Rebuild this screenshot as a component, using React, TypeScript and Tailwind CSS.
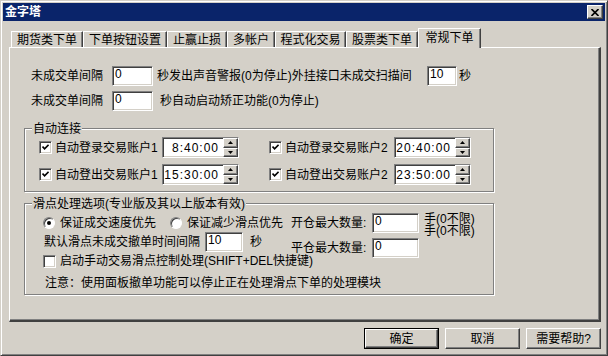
import React from 'react'

const raised = "border border-t-white border-l-white border-b-[#404040] border-r-[#404040] shadow-[inset_-1px_-1px_0_#808080]"
const sunken = "border border-t-[#808080] border-l-[#808080] border-b-white border-r-white shadow-[inset_1px_1px_0_#404040,inset_-1px_-1px_0_#d4d0c8]"
const etched = "border border-[#808080] shadow-[inset_1px_1px_0_#fff,1px_1px_0_#fff]"

function Field({w, value}: {w: string, value: string}) {
    return (
        <div className={`${w} h-[20px] shrink-0 bg-white ${sunken} pl-[2px] flex items-start leading-[14px]`}>{value}</div>
    )
}

function Check({on}: {on: boolean}) {
    return (
        <div className={`w-[13px] h-[13px] shrink-0 bg-white ${sunken} flex items-center justify-center`}>
            {on ? (
                <svg width="7" height="7" viewBox="0 0 7 7">
                    <path d="M0.5 2.5 L2.6 4.8 L6.6 0.8" fill="none" stroke="#000" strokeWidth="1.7"/>
                </svg>
            ) : null}
        </div>
    )
}

function Radio({on}: {on: boolean}) {
    return (
        <div className="w-[12px] h-[12px] shrink-0 rounded-full bg-white border border-t-[#808080] border-l-[#808080] border-b-white border-r-white shadow-[inset_1px_1px_0_#404040] flex items-center justify-center">
            {on ? <div className="w-[4px] h-[4px] rounded-full bg-black"/> : null}
        </div>
    )
}

function Spin({up}: {up: boolean}) {
    return (
        <div className={`flex-1 bg-[#d4d0c8] ${raised} flex items-center justify-center`}>
            <svg width="5" height="3" viewBox="0 0 5 3">
                <path d={up ? "M2.5 0 L5 3 L0 3 Z" : "M0 0 L5 0 L2.5 3 Z"} fill="#000"/>
            </svg>
        </div>
    )
}

function Time({value}: {value: string}) {
    return (
        <div className={`w-[77px] h-[21px] shrink-0 bg-white ${sunken} flex`}>
            <div className="flex-1 flex items-center justify-end pr-[4px] tracking-[1px]">{value}</div>
            <div className="w-[15px] flex flex-col">
                <Spin up={true}/>
                <Spin up={false}/>
            </div>
        </div>
    )
}

function Btn({label, def}: {label: string, def?: boolean}) {
    return (
        <div className={`w-[75px] h-[21px] ${def ? "border border-black" : ""} flex`}>
            <div className={`flex-1 ${raised} flex items-center justify-center`}>{label}</div>
        </div>
    )
}

const tabs = [
    {t: '期货类下单', w: 'w-[72px]'},
    {t: '下单按钮设置', w: 'w-[84px]'},
    {t: '止赢止损', w: 'w-[60px]'},
    {t: '多帐户', w: 'w-[48px]'},
    {t: '程式化交易', w: 'w-[71px]'},
    {t: '股票类下单', w: 'w-[72px]'},
]

export default function App() {
    return (
        <div className="w-[608px] h-[356px] bg-[#d4d0c8] border border-t-[#d4d0c8] border-l-[#d4d0c8] border-b-[#404040] border-r-[#404040] shadow-[inset_1px_1px_0_#fff,inset_-1px_-1px_0_#808080] p-[2px] flex flex-col text-[12px] leading-[14px] text-black font-['Liberation_Sans','Noto_Sans_CJK_SC',sans-serif]">

            {/* title bar */}
            <div className="h-[18px] bg-[#0a246a] flex items-center justify-between pl-[2px] pr-[2px]">
                <div className="text-white font-bold text-[12px]">金字塔</div>
                <div className={`w-[16px] h-[14px] bg-[#d4d0c8] ${raised} flex items-center justify-center`}>
                    <svg width="8" height="7" viewBox="0 0 8 7">
                        <path d="M0.5 0 L7.5 7 M7.5 0 L0.5 7" stroke="#000" strokeWidth="1.6"/>
                    </svg>
                </div>
            </div>

            {/* tabs */}
            <div className="mt-[7px] pl-[8px] flex items-end">
                {tabs.map((tab, i) => (
                    <div key={i} className={`${tab.w} h-[16px] border-l border-t border-white border-r border-r-[#404040] shadow-[inset_-1px_0_0_#808080] flex items-center justify-center`}>{tab.t}</div>
                ))}
                <div className="w-[63px] h-[20px] -mb-[1px] pb-[1px] z-10 bg-[#d4d0c8] border-l border-t border-white border-r border-r-[#404040] shadow-[inset_-1px_0_0_#808080] flex items-center justify-center">常规下单</div>
            </div>

            {/* panel */}
            <div className="ml-[6px] w-[592px] h-[275px] border-l border-t border-white border-r-2 border-b-2 border-r-[#404040] border-b-[#404040] shadow-[inset_-1px_-1px_0_#808080] px-[14px] pt-[18px] flex flex-col">

                <div className="ml-[7px] h-[20px] flex items-center">
                    <div className="w-[81px]">未成交单间隔</div>
                    <Field w="w-[41px]" value="0"/>
                    <div className="ml-[4px] w-[270px] whitespace-nowrap">秒发出声音警报(0为停止)外挂接口未成交扫描间</div>
                    <Field w="w-[30px]" value="10"/>
                    <div className="ml-[2px]">秒</div>
                </div>
                <div className="ml-[7px] mt-[5px] h-[20px] flex items-center">
                    <div className="w-[81px]">未成交单间隔</div>
                    <Field w="w-[41px]" value="0"/>
                    <div className="ml-[7px] whitespace-nowrap">秒自动启动矫正功能(0为停止)</div>
                </div>

                {/* 自动连接 */}
                <div className={`mt-[17px] w-[470px] ${etched} pl-[14px] pb-[6px] flex flex-col`}>
                    <div className="-mt-[7px] -ml-[7px] w-fit px-[1px] bg-[#d4d0c8]">自动连接</div>
                    <div className="mt-[1px] h-[21px] flex items-center">
                        <Check on={true}/>
                        <div className="ml-[3px] w-[107px]">自动登录交易账户1</div>
                        <Time value="8:40:00"/>
                        <div className="ml-[30px]"><Check on={true}/></div>
                        <div className="ml-[3px] w-[109px]">自动登录交易账户2</div>
                        <Time value="20:40:00"/>
                    </div>
                    <div className="mt-[6px] h-[21px] flex items-center">
                        <Check on={true}/>
                        <div className="ml-[3px] w-[107px]">自动登出交易账户1</div>
                        <Time value="15:30:00"/>
                        <div className="ml-[30px]"><Check on={true}/></div>
                        <div className="ml-[3px] w-[109px]">自动登出交易账户2</div>
                        <Time value="23:50:00"/>
                    </div>
                </div>

                {/* 滑点处理选项 */}
                <div className={`mt-[11px] w-[470px] ${etched} pl-[18px] pb-[4px] flex flex-col`}>
                    <div className="-mt-[7px] -ml-[11px] w-fit px-[1px] bg-[#d4d0c8] whitespace-nowrap">滑点处理选项(专业版及其以上版本有效)</div>
                    <div className="mt-[2px] flex">
                        <div className="w-[248px] shrink-0 flex flex-col whitespace-nowrap">
                            <div className="h-[19px] flex items-center">
                                <Radio on={true}/>
                                <div className="ml-[5px] w-[110px]">保证成交速度优先</div>
                                <Radio on={false}/>
                                <div className="ml-[5px]">保证减少滑点优先</div>
                            </div>
                            <div className="h-[20px] flex items-center">
                                <div className="ml-[1px] w-[161px]">默认滑点未成交撤单时间间隔</div>
                                <Field w="w-[38px]" value="10"/>
                                <div className="ml-[7px]">秒</div>
                            </div>
                            <div className="mt-[2px] h-[14px] flex items-center">
                                <Check on={false}/>
                                <div className="ml-[4px]">启动手动交易滑点控制处理(SHIFT+DEL快捷键)</div>
                            </div>
                        </div>
                        <div className="flex flex-col whitespace-nowrap">
                            <div className="h-[20px] flex items-center">
                                <div className="w-[81px]">开仓最大数量:</div>
                                <Field w="w-[47px]" value="0"/>
                                <div className="ml-[5px] self-start flex flex-col leading-[12px]">
                                    <span>手(0不限)</span>
                                    <span>手(0不限)</span>
                                </div>
                            </div>
                            <div className="mt-[5px] h-[20px] flex items-center">
                                <div className="w-[81px]">平仓最大数量:</div>
                                <Field w="w-[47px]" value="0"/>
                            </div>
                        </div>
                    </div>
                    <div className="mt-[8px] ml-[2px] h-[14px] whitespace-nowrap">注意：使用面板撤单功能可以停止正在处理滑点下单的处理模块</div>
                </div>
            </div>

            {/* buttons */}
            <div className="mt-[6px] pr-[4px] flex justify-end gap-[6px]">
                <Btn label="确定" def={true}/>
                <Btn label="取消"/>
                <Btn label="需要帮助?"/>
            </div>
        </div>
    )
}
